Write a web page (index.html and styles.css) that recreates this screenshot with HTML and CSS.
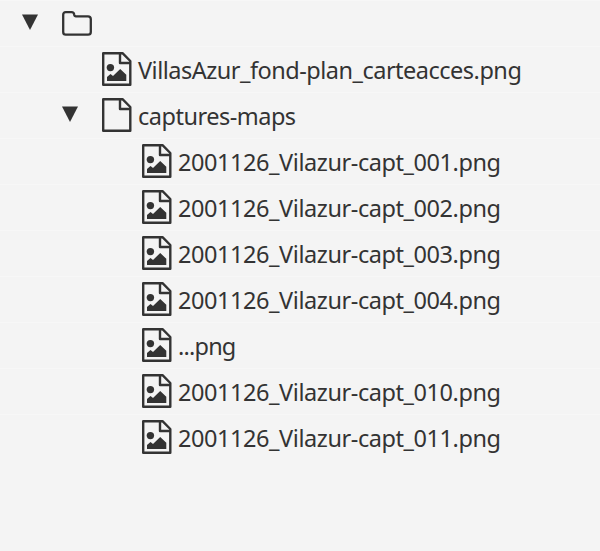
FILE: index.html
```
<!DOCTYPE html>
<html lang="fr">
<head>
<meta charset="utf-8">
<title>captures-maps</title>
<link rel="stylesheet" href="styles.css">
</head>
<body>
<svg class="defs" width="0" height="0">
  <symbol id="arrow" viewBox="0 0 16 16"><path d="M0 .4H16L8 16Z" fill="currentColor"/></symbol>
  <symbol id="folder" viewBox="0 0 30 26"><path d="M1.2 3.7Q1.2 1.2 3.8 1.2H9.5Q12 1.2 12.2 3.7Q12.4 5.3 14 5.3H26Q28.8 5.3 28.8 8V21Q28.8 23.7 26 23.7H3.8Q1.2 23.7 1.2 21Z" fill="none" stroke="currentColor" stroke-width="2.3"/></symbol>
  <symbol id="file" viewBox="0 0 30 34"><path d="M1.2 1.2H20.5L28.3 9V32.7H1.2ZM18 1.2V11H28.3" fill="none" stroke="currentColor" stroke-width="2.4" stroke-linejoin="round"/></symbol>
  <symbol id="image" viewBox="0 0 30 34"><use href="#file"/><circle cx="8.4" cy="15.6" r="3.7" fill="currentColor"/><path d="M5 29V25L8.5 22L11 24L18.2 17L24.3 22.7V29Z" fill="currentColor"/></symbol>
</svg>
<ul class="tree">
  <li class="row"><svg class="arrow"><use href="#arrow"/></svg><svg class="folder"><use href="#folder"/></svg></li>
  <li class="row level-1"><svg class="file"><use href="#image"/></svg><span class="name">VillasAzur_fond-plan_carteacces.png</span></li>
  <li class="row level-1"><svg class="arrow"><use href="#arrow"/></svg><svg class="file"><use href="#file"/></svg><span class="name">captures-maps</span></li>
  <li class="row level-2"><svg class="file"><use href="#image"/></svg><span class="name capture">2001126_Vilazur-capt_001.png</span></li>
  <li class="row level-2"><svg class="file"><use href="#image"/></svg><span class="name capture">2001126_Vilazur-capt_002.png</span></li>
  <li class="row level-2"><svg class="file"><use href="#image"/></svg><span class="name capture">2001126_Vilazur-capt_003.png</span></li>
  <li class="row level-2"><svg class="file"><use href="#image"/></svg><span class="name capture">2001126_Vilazur-capt_004.png</span></li>
  <li class="row level-2"><svg class="file"><use href="#image"/></svg><span class="name short">...png</span></li>
  <li class="row level-2"><svg class="file"><use href="#image"/></svg><span class="name capture">2001126_Vilazur-capt_010.png</span></li>
  <li class="row level-2"><svg class="file"><use href="#image"/></svg><span class="name capture">2001126_Vilazur-capt_011.png</span></li>
</ul>
</body>
</html>
```
FILE: styles.css
```
body {
  margin: 0;
  background: #f4f4f4;
  color: #333;
  font-family: "Noto Sans", sans-serif;
}
.defs { display: none; }
.tree { margin: 0; padding: 0; list-style: none; }
.row {
  box-sizing: border-box;
  display: flex;
  align-items: flex-start;
  height: 46px;
  padding-left: 22px;
  border-top: 1px solid #f7f7f7;
}
.level-1 { padding-left: 62px; }
.level-2 { padding-left: 102px; }
.row svg { flex: none; }
.arrow { width: 16px; height: 16px; margin: 13px 24px 0 0; }
.folder { width: 30px; height: 26px; margin-top: 10px; }
.file { width: 30px; height: 34px; margin-top: 5px; }
.file:first-child { margin-left: 40px; }
.name {
  margin: 6px 0 0 6px;
  font-size: 23.5px;
  line-height: 34px;
  letter-spacing: -0.5px;
  white-space: nowrap;
}
.capture { letter-spacing: -0.43px; }
.short { letter-spacing: -0.8px; }
```
